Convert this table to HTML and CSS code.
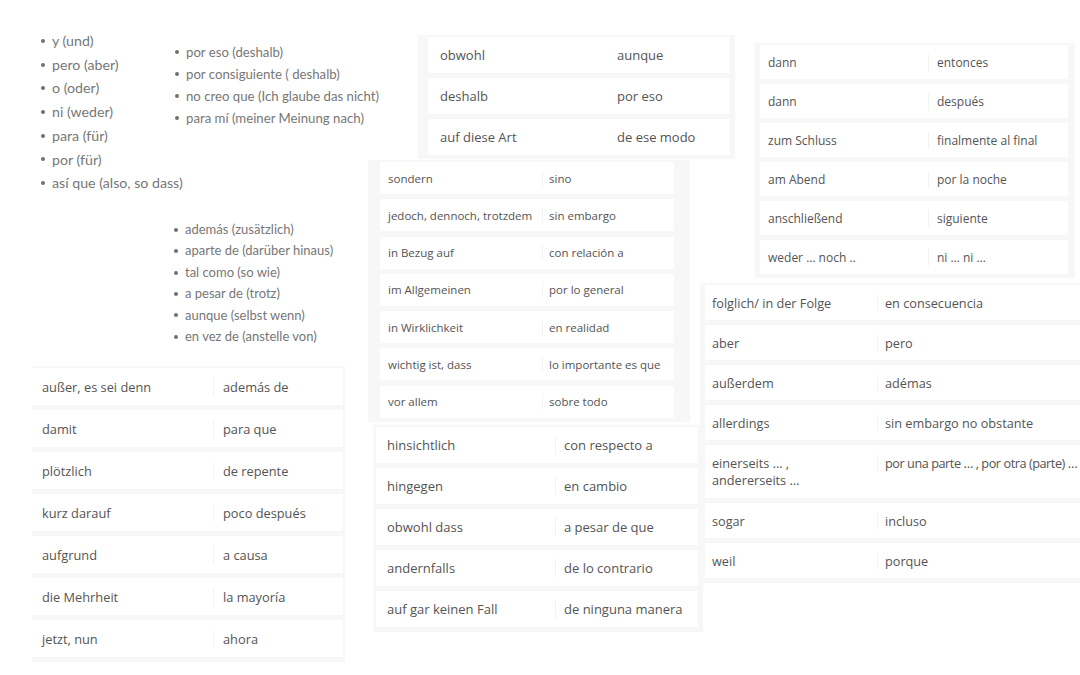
FILE: index.html
```html
<!DOCTYPE html>
<html lang="de">
<head>
<meta charset="utf-8">
<title>Konnektoren</title>
<link rel="stylesheet" href="styles.css">
</head>
<body>
<div class="canvas">
  <ul class="blist list-a">
    <li>y (und)</li>
    <li>pero (aber)</li>
    <li>o (oder)</li>
    <li>ni (weder)</li>
    <li>para (für)</li>
    <li>por (für)</li>
    <li>así que (also, so dass)</li>
  </ul>
  <ul class="blist list-b">
    <li>por eso (deshalb)</li>
    <li>por consiguiente ( deshalb)</li>
    <li>no creo que (Ich glaube das nicht)</li>
    <li>para mí (meiner Meinung nach)</li>
  </ul>
  <ul class="blist list-c">
    <li>además (zusätzlich)</li>
    <li>aparte de (darüber hinaus)</li>
    <li>tal como (so wie)</li>
    <li>a pesar de (trotz)</li>
    <li>aunque (selbst wenn)</li>
    <li>en vez de (anstelle von)</li>
  </ul>

  <div class="card t-ausser">
    <div class="row"><span>außer, es sei denn</span><span>además de</span></div>
    <div class="row"><span>damit</span><span>para que</span></div>
    <div class="row"><span>plötzlich</span><span>de repente</span></div>
    <div class="row"><span>kurz darauf</span><span>poco después</span></div>
    <div class="row"><span>aufgrund</span><span>a causa</span></div>
    <div class="row"><span>die Mehrheit</span><span>la mayoría</span></div>
    <div class="row"><span>jetzt, nun</span><span>ahora</span></div>
  </div>

  <div class="card t-obwohl">
    <div class="row"><span>obwohl</span><span>aunque</span></div>
    <div class="row"><span>deshalb</span><span>por eso</span></div>
    <div class="row"><span>auf diese Art</span><span>de ese modo</span></div>
  </div>

  <div class="card t-sondern">
    <div class="row"><span>sondern</span><span>sino</span></div>
    <div class="row"><span>jedoch, dennoch, trotzdem</span><span>sin embargo</span></div>
    <div class="row"><span>in Bezug auf</span><span>con relación a</span></div>
    <div class="row"><span>im Allgemeinen</span><span>por lo general</span></div>
    <div class="row"><span>in Wirklichkeit</span><span>en realidad</span></div>
    <div class="row"><span>wichtig ist, dass</span><span>lo importante es que</span></div>
    <div class="row"><span>vor allem</span><span>sobre todo</span></div>
  </div>

  <div class="card t-hinsicht">
    <div class="row"><span>hinsichtlich</span><span>con respecto a</span></div>
    <div class="row"><span>hingegen</span><span>en cambio</span></div>
    <div class="row"><span>obwohl dass</span><span>a pesar de que</span></div>
    <div class="row"><span>andernfalls</span><span>de lo contrario</span></div>
    <div class="row"><span>auf gar keinen Fall</span><span>de ninguna manera</span></div>
  </div>

  <div class="card t-dann">
    <div class="row"><span>dann</span><span>entonces</span></div>
    <div class="row"><span>dann</span><span>después</span></div>
    <div class="row"><span>zum Schluss</span><span>finalmente al final</span></div>
    <div class="row"><span>am Abend</span><span>por la noche</span></div>
    <div class="row"><span>anschließend</span><span>siguiente</span></div>
    <div class="row"><span>weder … noch ..</span><span>ni … ni …</span></div>
  </div>

  <div class="card t-folglich">
    <div class="row"><span>folglich/ in der Folge</span><span>en consecuencia</span></div>
    <div class="row"><span>aber</span><span>pero</span></div>
    <div class="row"><span>außerdem</span><span>adémas</span></div>
    <div class="row"><span>allerdings</span><span>sin embargo no obstante</span></div>
    <div class="row tall"><span>einerseits … ,<br>andererseits …</span><span class="tight">por una parte … , por otra (parte) …</span></div>
    <div class="row"><span>sogar</span><span>incluso</span></div>
    <div class="row"><span>weil</span><span>porque</span></div>
  </div>
</div>
</body>
</html>
```

FILE: styles.css
```css
* { box-sizing: border-box; }
html, body { margin: 0; padding: 0; background: #ffffff; }
body { width: 1080px; height: 675px; overflow: hidden; }
.canvas { position: relative; width: 1080px; height: 675px; background: #fff; }

/* bullet lists */
.blist {
  position: absolute;
  margin: 0;
  padding: 0;
  list-style: none;
  font-family: Lato, "Open Sans", sans-serif;
  color: #777777;
  white-space: nowrap;
}
.blist li { position: relative; padding-left: 11px; }
.blist li::before {
  content: "";
  position: absolute;
  left: 0;
  top: 50%;
  width: 4px;
  height: 4px;
  margin-top: -2px;
  border-radius: 50%;
  background: #707070;
}
.list-a { left: 41px; top: 29px; font-size: 14.2px; line-height: 23.7px; }
.list-b { left: 175px; top: 41px; font-size: 13.2px; line-height: 22px; }
.list-c { left: 174px; top: 219px; font-size: 13px; line-height: 21.4px; }

/* tables */
.card {
  position: absolute;
  display: flex;
  flex-direction: column;
  background: #f7f7f7;
  font-family: "Open Sans", sans-serif;
  color: #545454;
  white-space: nowrap;
  overflow: hidden;
}
.row {
  display: grid;
  align-items: center;
  background: #fff;
}
.row span { display: block; }
.row span + span { border-left: 1px solid #f3f3f3; }

.t-ausser { left: 32px; top: 366px; width: 313px; padding: 2px 2px 5px 0; gap: 5px; font-size: 12.8px; }
.t-ausser .row { height: 37px; grid-template-columns: 181px 1fr; }
.t-ausser .row span:first-child { padding-left: 10px; }
.t-ausser .row span + span { padding-left: 9px; }

.t-obwohl { left: 418px; top: 35px; width: 317px; padding: 2px 5px 4px 10px; gap: 5px; font-size: 13px; }
.t-obwohl .row { height: 36px; grid-template-columns: 177px 1fr; }
.t-obwohl .row span:first-child { padding-left: 12px; }
.t-obwohl .row span + span { padding-left: 12px; border-left: 0; }

.t-sondern { left: 368px; top: 160px; width: 322px; padding: 2px 16px 4px 12px; gap: 5.3px; font-size: 11.5px; }
.t-sondern .row { height: 32px; grid-template-columns: 162px 1fr; }
.t-sondern .row span:first-child { padding-left: 8px; }
.t-sondern .row span + span { padding-left: 6px; }

.t-hinsicht { left: 373px; top: 425px; width: 330px; padding: 2px 5px 5px 3px; gap: 5px; font-size: 13px; }
.t-hinsicht .row { height: 36px; grid-template-columns: 179px 1fr; }
.t-hinsicht .row span:first-child { padding-left: 11px; }
.t-hinsicht .row span + span { padding-left: 8px; }

.t-dann { left: 755px; top: 43px; width: 320px; padding: 2px 7px 4px 5px; gap: 5px; font-size: 12px; }
.t-dann .row { height: 34px; grid-template-columns: 168px 1fr; }
.t-dann .row span:first-child { padding-left: 8px; }
.t-dann .row span + span { padding-left: 8px; }

.t-folglich { left: 700px; top: 283px; width: 380px; padding: 2px 0 5px 5px; gap: 5px; font-size: 12.7px; }
.t-folglich .row { height: 35px; grid-template-columns: 172px 1fr; }
.t-folglich .row.tall { height: 53px; line-height: 17px; align-items: start; padding-top: 10px; }
.t-folglich .row span:first-child { padding-left: 7px; }
.t-folglich .row span + span { padding-left: 7px; }
.t-folglich .row .tight { letter-spacing: -0.45px; }
```
